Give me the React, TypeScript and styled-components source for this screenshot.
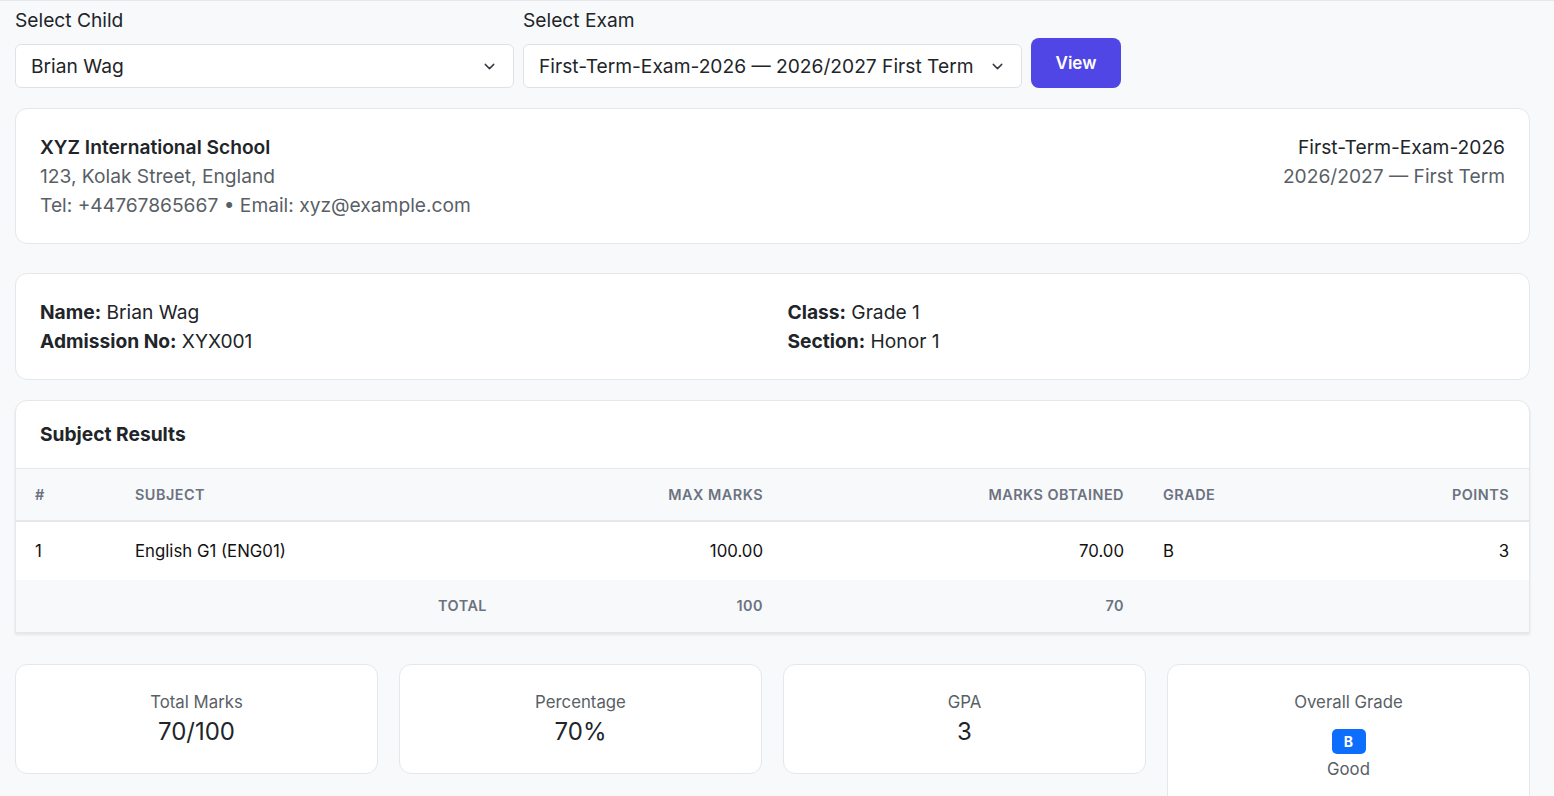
import styled, { createGlobalStyle } from "styled-components";
import { ChevronDown } from "lucide-react";

const GlobalStyle = createGlobalStyle`
  * { box-sizing: border-box; }
  body {
    margin: 0;
    background: #f8f9fb;
    font-family: Inter, "Noto Sans", sans-serif;
    color: #212529;
  }
`;

type Subject = {
  id: number;
  name: string;
  maxMarks: string;
  obtained: string;
  grade: string;
  points: number;
};

const SUBJECTS: Subject[] = [
  { id: 1, name: "English G1 (ENG01)", maxMarks: "100.00", obtained: "70.00", grade: "B", points: 3 },
];

const STATS = [
  { label: "Total Marks", value: "70/100" },
  { label: "Percentage", value: "70%" },
  { label: "GPA", value: "3" },
];

export default function App() {
  return (
    <>
      <GlobalStyle />
      <Page>
        <FilterBar>
          <Field>
            <FieldLabel>Select Child</FieldLabel>
            <SelectBox>
              <span>Brian Wag</span>
              <ChevronDown size={17} strokeWidth={2} color="#343a40" />
            </SelectBox>
          </Field>
          <Field>
            <FieldLabel>Select Exam</FieldLabel>
            <SelectBox>
              <span>First-Term-Exam-2026 — 2026/2027 First Term</span>
              <ChevronDown size={17} strokeWidth={2} color="#343a40" />
            </SelectBox>
          </Field>
          <ViewButton>View</ViewButton>
        </FilterBar>

        <Card $pad="24px 24px 23px" $mt={20}>
          <SchoolHeader>
            <div>
              <Title>XYZ International School</Title>
              <Muted>123, Kolak Street, England</Muted>
              <Muted>Tel: +44767865667 • Email: xyz@example.com</Muted>
            </div>
            <ExamInfo>
              <Line>First-Term-Exam-2026</Line>
              <Muted>2026/2027 — First Term</Muted>
            </ExamInfo>
          </SchoolHeader>
        </Card>

        <Card $pad="24px 24px 23px" $mt={29}>
          <InfoGrid>
            <div>
              <Line><b>Name:</b> Brian Wag</Line>
              <Line><b>Admission No:</b> XYX001</Line>
            </div>
            <div>
              <Line><b>Class:</b> Grade 1</Line>
              <Line><b>Section:</b> Honor 1</Line>
            </div>
          </InfoGrid>
        </Card>

        <TableCard>
          <TableTitle>Subject Results</TableTitle>
          <Table>
            <colgroup>
              <col style={{ width: 100 }} />
              <col style={{ width: 391 }} />
              <col style={{ width: 276 }} />
              <col style={{ width: 361 }} />
              <col style={{ width: 157 }} />
              <col />
            </colgroup>
            <thead>
              <tr>
                <Th>#</Th>
                <Th>Subject</Th>
                <Th $right>Max Marks</Th>
                <Th $right>Marks Obtained</Th>
                <Th>Grade</Th>
                <Th $right>Points</Th>
              </tr>
            </thead>
            <tbody>
              {SUBJECTS.map((s) => (
                <tr key={s.id}>
                  <Td>{s.id}</Td>
                  <Td>{s.name}</Td>
                  <Td $right>{s.maxMarks}</Td>
                  <Td $right>{s.obtained}</Td>
                  <Td>{s.grade}</Td>
                  <Td $right>{s.points}</Td>
                </tr>
              ))}
              <TotalRow>
                <TotalCell colSpan={2} $right>Total</TotalCell>
                <TotalCell $right>100</TotalCell>
                <TotalCell $right>70</TotalCell>
                <TotalCell />
                <TotalCell />
              </TotalRow>
            </tbody>
          </Table>
        </TableCard>

        <StatsGrid>
          {STATS.map((s) => (
            <StatCard key={s.label}>
              <StatLabel>{s.label}</StatLabel>
              <StatValue>{s.value}</StatValue>
            </StatCard>
          ))}
          <StatCard>
            <StatLabel>Overall Grade</StatLabel>
            <GradeBadge>B</GradeBadge>
            <StatLabel>Good</StatLabel>
          </StatCard>
        </StatsGrid>
      </Page>
    </>
  );
}

const Page = styled.div`
  border-top: 1px solid #e5e7eb;
  padding: 6px 24px 30px 15px;
`;

const FilterBar = styled.div`
  display: flex;
  align-items: flex-end;
  gap: 9px;
`;

const Field = styled.div`
  display: flex;
  flex-direction: column;
  width: 499px;
`;

const FieldLabel = styled.label`
  font-size: 19.2px;
  line-height: 27px;
  margin-bottom: 10px;
  color: #212529;
`;

const SelectBox = styled.div`
  height: 44px;
  background: #fff;
  border: 1px solid #dee2e6;
  border-radius: 6px;
  display: flex;
  align-items: center;
  justify-content: space-between;
  padding: 0 15px 0 15px;
  font-size: 19.2px;
  color: #212529;
`;

const ViewButton = styled.button`
  height: 50px;
  width: 90px;
  border: none;
  border-radius: 8px;
  background: #4f46e5;
  color: #fff;
  font-family: inherit;
  font-size: 17px;
  font-weight: 600;
  cursor: pointer;
`;

const Card = styled.div<{ $pad?: string; $mt?: number }>`
  background: #fff;
  border: 1px solid #e5e7eb;
  border-radius: 12px;
  padding: ${(p) => p.$pad ?? "0"};
  margin-top: ${(p) => (p.$mt ? `${p.$mt}px` : "19px")};
`;

const SchoolHeader = styled.div`
  display: flex;
  justify-content: space-between;
`;

const Title = styled.div`
  font-size: 19.2px;
  line-height: 29px;
  font-weight: 600;
  color: #212529;
`;

const Line = styled.div`
  font-size: 19.2px;
  line-height: 29px;
  color: #212529;

  b {
    font-weight: 700;
  }
`;

const Muted = styled.div`
  font-size: 19.2px;
  line-height: 29px;
  color: #595f66;
`;

const ExamInfo = styled.div`
  text-align: right;
`;

const InfoGrid = styled.div`
  display: grid;
  grid-template-columns: 1fr 1fr;
  column-gap: 30px;
`;

const TableCard = styled(Card)`
  margin-top: 20px;
  overflow: hidden;
  box-shadow: 0 2px 3px rgba(0, 0, 0, 0.08);
  border-bottom-left-radius: 0;
  border-bottom-right-radius: 0;
`;

const TableTitle = styled.div`
  font-size: 19.2px;
  line-height: 29px;
  font-weight: 700;
  padding: 19px 24px 19px 24px;
  border-bottom: 1px solid #e5e7eb;
`;

const Table = styled.table`
  width: 100%;
  border-collapse: collapse;
  table-layout: fixed;
`;

const Th = styled.th<{ $right?: boolean }>`
  background: #f8f9fa;
  text-align: ${(p) => (p.$right ? "right" : "left")};
  font-size: 14.4px;
  font-weight: 600;
  letter-spacing: 0.5px;
  text-transform: uppercase;
  color: #6b7280;
  padding: 16px 20px 15px 19px;
  line-height: 20px;
  border-bottom: 2px solid #e5e7eb;
`;

const Td = styled.td<{ $right?: boolean }>`
  text-align: ${(p) => (p.$right ? "right" : "left")};
  font-size: 16.8px;
  line-height: 22px;
  padding: 18px 20px 18px 19px;
  color: #111;
`;

const TotalRow = styled.tr`
  background: #f8f9fa;
`;

const TotalCell = styled.td<{ $right?: boolean }>`
  text-align: ${(p) => (p.$right ? "right" : "left")};
  font-size: 14.4px;
  font-weight: 600;
  letter-spacing: 0.5px;
  text-transform: uppercase;
  color: #6b7280;
  line-height: 20px;
  padding: 16px 20px;
`;

const StatsGrid = styled.div`
  display: grid;
  grid-template-columns: repeat(4, 1fr);
  gap: 21px;
  align-items: start;
  margin-top: 31px;
`;

const StatCard = styled.div`
  background: #fff;
  border: 1px solid #e5e7eb;
  border-radius: 12px;
  padding: 25px 16px 25px;
  display: flex;
  flex-direction: column;
  align-items: center;
`;

const StatLabel = styled.div`
  font-size: 16.8px;
  line-height: 24px;
  color: #595f66;
`;

const StatValue = styled.div`
  font-size: 24px;
  line-height: 32px;
  margin-top: 2px;
  color: #212529;
`;

const GradeBadge = styled.span`
  margin: 15px 0 3px;
  width: 34px;
  height: 25px;
  border-radius: 5px;
  background: #0d6efd;
  color: #fff;
  font-size: 14px;
  font-weight: 700;
  display: flex;
  align-items: center;
  justify-content: center;
`;
